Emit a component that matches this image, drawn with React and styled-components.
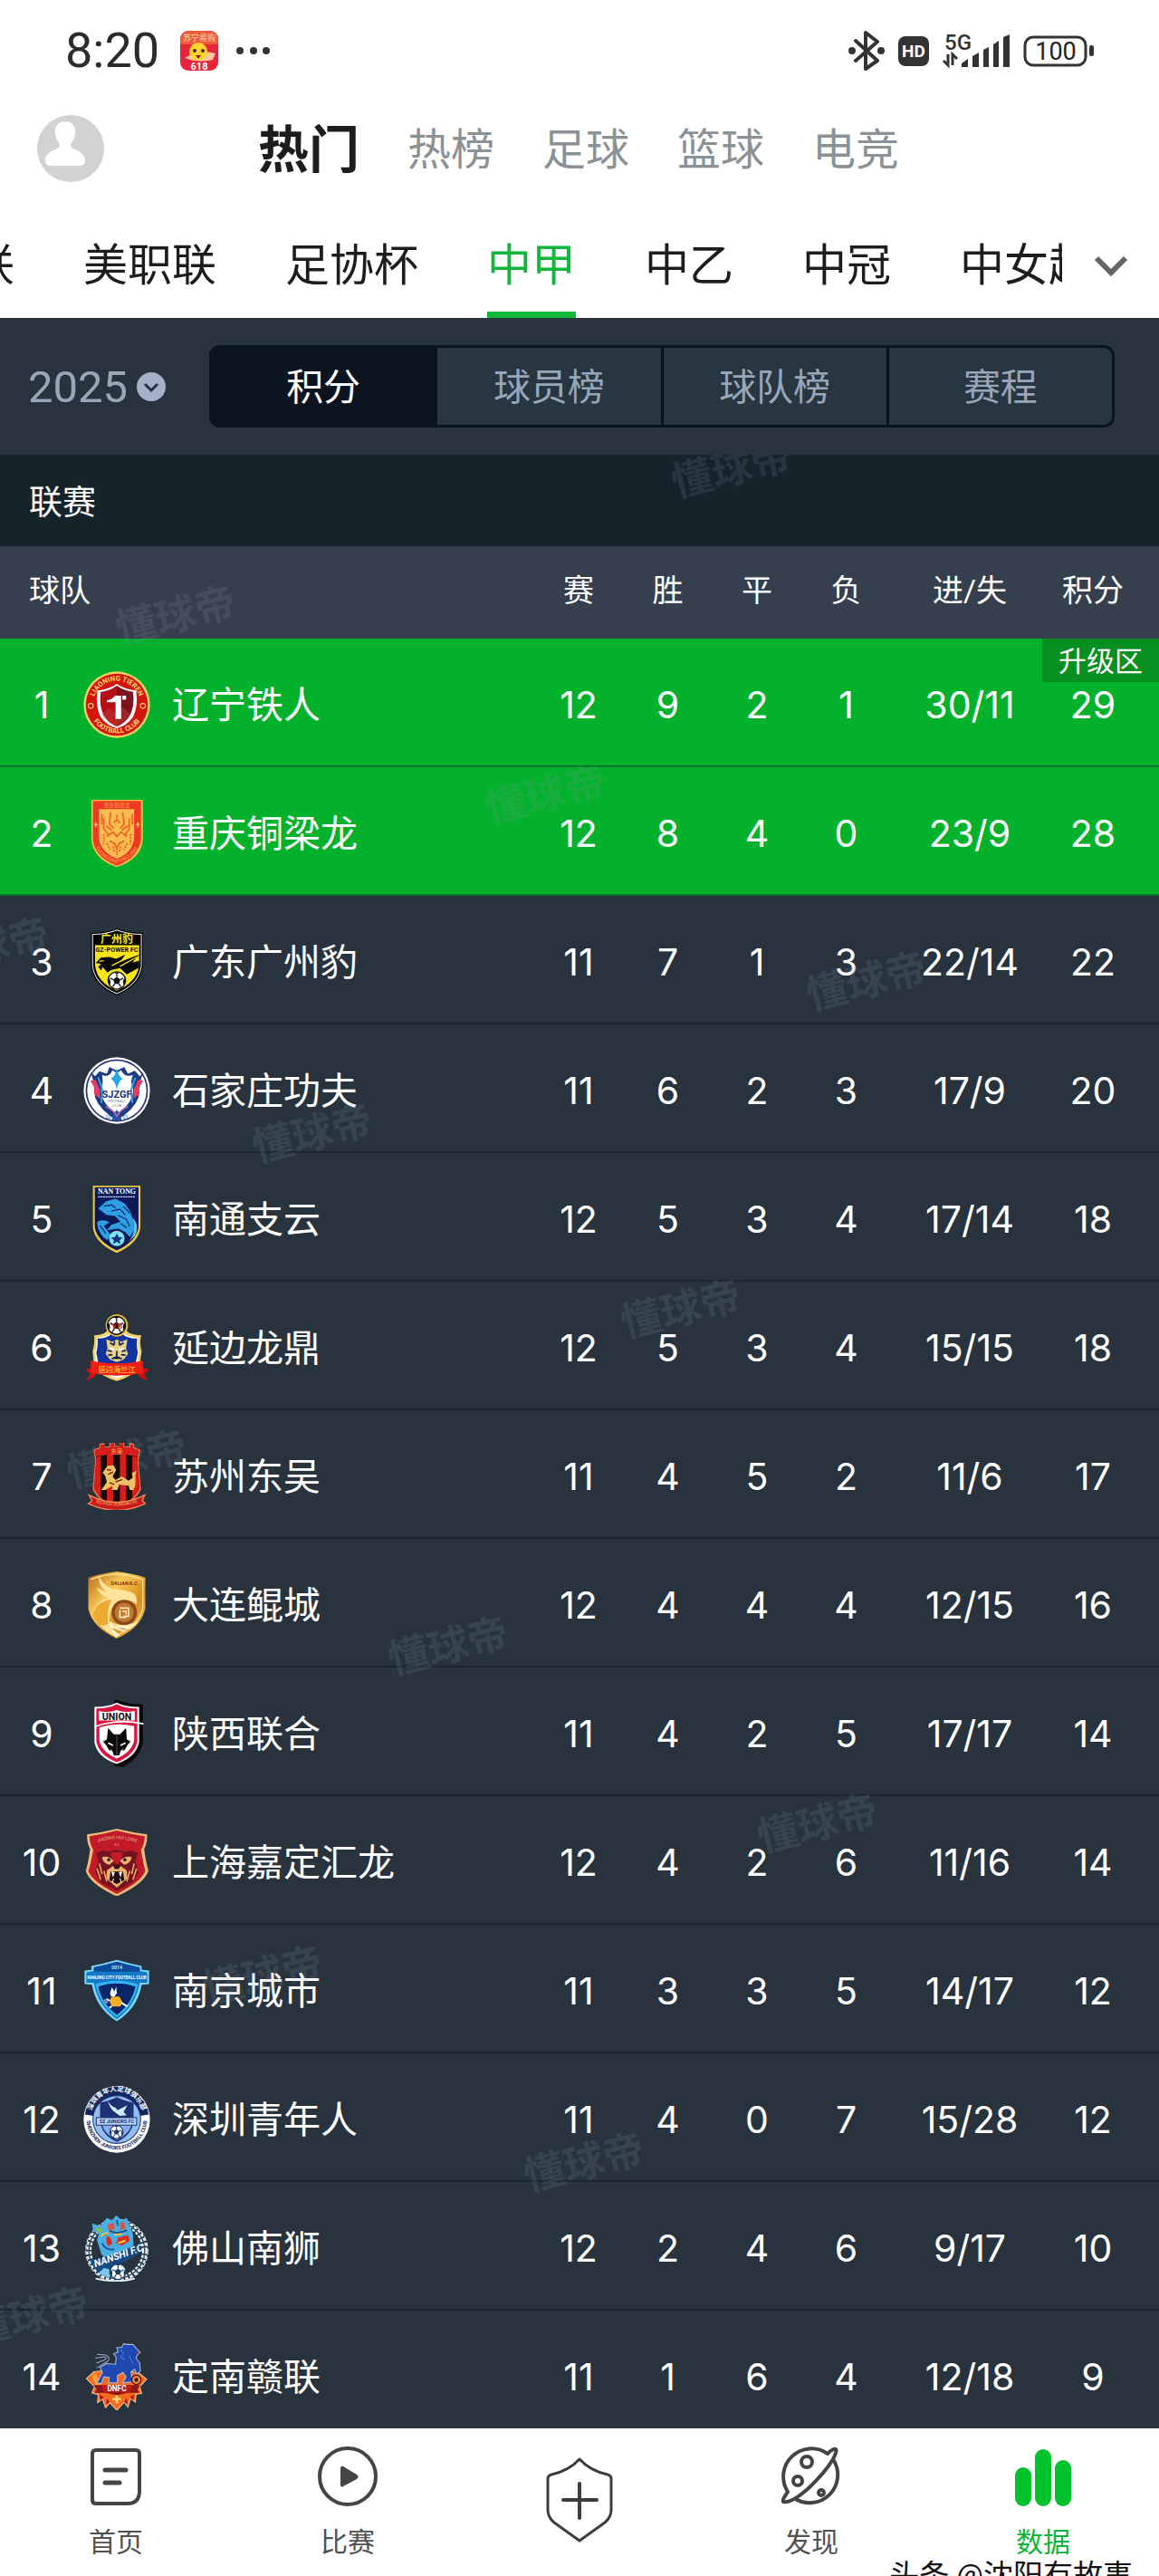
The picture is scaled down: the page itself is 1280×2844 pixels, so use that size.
import React from 'react'
import styled, { createGlobalStyle } from 'styled-components'

const teams = [
  { name: '辽宁铁人', played: 12, win: 9, draw: 2, loss: 1, goals: '30/11', points: 29, up: true, tag: '升级区' },
  { name: '重庆铜梁龙', played: 12, win: 8, draw: 4, loss: 0, goals: '23/9', points: 28, up: true },
  { name: '广东广州豹', played: 11, win: 7, draw: 1, loss: 3, goals: '22/14', points: 22 },
  { name: '石家庄功夫', played: 11, win: 6, draw: 2, loss: 3, goals: '17/9', points: 20 },
  { name: '南通支云', played: 12, win: 5, draw: 3, loss: 4, goals: '17/14', points: 18 },
  { name: '延边龙鼎', played: 12, win: 5, draw: 3, loss: 4, goals: '15/15', points: 18 },
  { name: '苏州东吴', played: 11, win: 4, draw: 5, loss: 2, goals: '11/6', points: 17 },
  { name: '大连鲲城', played: 12, win: 4, draw: 4, loss: 4, goals: '12/15', points: 16 },
  { name: '陕西联合', played: 11, win: 4, draw: 2, loss: 5, goals: '17/17', points: 14 },
  { name: '上海嘉定汇龙', played: 12, win: 4, draw: 2, loss: 6, goals: '11/16', points: 14 },
  { name: '南京城市', played: 11, win: 3, draw: 3, loss: 5, goals: '14/17', points: 12 },
  { name: '深圳青年人', played: 11, win: 4, draw: 0, loss: 7, goals: '15/28', points: 12 },
  { name: '佛山南狮', played: 12, win: 2, draw: 4, loss: 6, goals: '9/17', points: 10 },
  { name: '定南赣联', played: 11, win: 1, draw: 6, loss: 4, goals: '12/18', points: 9 },
]

const channels = ['热门', '热榜', '足球', '篮球', '电竞']
const leagues = ['联', '美职联', '足协杯', '中甲', '中乙', '中冠', '中女超']
const views = ['积分', '球员榜', '球队榜', '赛程']

// centre points inside the standings area
const marks = [
  [808, 16], [194, 178], [602, 376], [957, 582], [345, 750], [752, 944], [140, 1110],
  [495, 1316], [903, 1512], [290, 1680], [645, 1886], [-12, 544], [32, 2056],
]

const Ball = ({ x, y, r, ink = '#111' }) => (
  <g transform={`translate(${x} ${y}) scale(${r / 30})`}>
    <circle r="29" fill="#fff" stroke={ink} strokeWidth="4" />
    <path d="M0-12 12-3 7 11H-7L-12-3Z" fill={ink} />
    <path d="M0-12V-22M12-3 21-8M7 11 13 20M-7 11-13 20M-12-3-21-8" stroke={ink} strokeWidth="4" />
    <path d="M-9-27Q0-17 9-27ZM28-8Q18-6 22 14L28 8ZM-28-8Q-18-6-22 14L-28 8ZM20 21Q12 17 7 28ZM-20 21Q-12 17-7 28Z" fill={ink} />
  </g>
)

const badges = [
  <>
    <circle cx="108" cy="108" r="107" fill="#f6d162" />
    <circle cx="108" cy="108" r="100" fill="#d3140f" />
    <path d="M108 41Q131 58 170 62 178 112 160 148 140 176 108 184 76 176 56 148 38 112 46 62 85 58 108 41Z" fill="#fff" />
    <path d="M108 47Q131 64 160 67 166 112 150 142 134 168 108 178 82 168 66 142 50 112 56 67 85 64 108 47Z" fill="#b50f18" />
    <path d="M108 47Q131 64 160 67 166 112 150 142 134 168 108 178Z" fill="#7c1420" />
    <path d="M60 140 84 118 100 132 118 112 152 138 134 164 108 178 82 166Z" fill="#c33b35" opacity=".5" />
    <path d="M76 94Q94 92 102 79H122V154H104V100H76ZM126 79H138V92H126Z" fill="#fff" />
    <path id="ln1" d="M31 108A77 77 0 0 1 185 108" fill="none" />
    <path id="ln2" d="M16 108A92 92 0 0 0 200 108" fill="none" />
    <g fill="#f7d36b" fontSize="23" fontWeight="700" textAnchor="middle">
      <text><textPath href="#ln1" startOffset="50%">LIAONING TIEREN</textPath></text>
      <text><textPath href="#ln2" startOffset="50%">FOOTBALL CLUB</textPath></text>
    </g>
    <circle cx="24" cy="112" r="8" fill="none" stroke="#f7d36b" strokeWidth="3" />
    <circle cx="192" cy="112" r="8" fill="none" stroke="#f7d36b" strokeWidth="3" />
  </>,
  <>
    <path d="M29 0H187Q192 0 192 6V124Q190 190 108 217 28 190 26 124V6Q26 0 29 0Z" fill="#f9bd45" />
    <path d="M31 4H186V124Q182 184 108 212 34 184 31 124Z" fill="#ef3924" />
    <path d="M50 30H164V122Q160 170 108 190 54 168 50 122Z" fill="#fbbd50" />
    <text x="108" y="24" fontSize="17" textAnchor="middle" fill="#f9a13e">重庆铜梁龙</text>
    <g fill="none" stroke="#ee6324" strokeWidth="5">
      <path d="M66 60V94L84 116M148 60V94L132 116M88 40 84 78 98 92M126 40 132 78 118 92M98 74 108 64 118 74M108 48V60M76 118 96 104 108 118 122 104 142 118M84 132 102 142 108 158 114 142 132 132" />
      <path d="M66 110V144M152 110V144M76 140 86 162M142 140 130 162M96 150 100 170M120 150 116 170M108 164V178" strokeDasharray="7 3" />
      <path d="M60 46V80M158 46V80M74 84 92 98M144 84 124 98" />
    </g>
    <path id="cq" d="M34 132Q42 184 108 205 174 184 182 132" fill="none" />
    <text fontSize="15" fill="#fbb94e" textAnchor="middle"><textPath href="#cq" startOffset="50%">CHONGQING TONGLIANG</textPath></text>
    <path d="M34 80H46M40 72V88M170 80H182M176 72V88" stroke="#fbd06a" strokeWidth="4" />
  </>,
  <>
    <path d="M108 0Q140 14 192 14V122Q184 186 108 216 32 186 25 122V14Q78 14 108 0Z" fill="#050505" />
    <path d="M108 5Q142 19 187 19V122Q178 182 108 210 38 182 30 122V19Q76 19 108 5Z" fill="none" stroke="#eee" strokeWidth="3" />
    <path d="M38 54H180V120Q172 174 108 201 44 174 38 120Z" fill="#f7e51a" />
    <text x="108" y="47" fontSize="35" fontWeight="700" textAnchor="middle" fill="#f7e51a">广州豹</text>
    <text x="108" y="76" fontSize="21" fontWeight="700" textAnchor="middle" fill="#111">GZ-POWER FC</text>
    <path d="M40 112 56 94 84 92 106 98 136 84 118 108 180 85 158 110 180 104V126L140 148 118 128 90 134 78 142 62 124 58 136 48 124 58 114Z" fill="#080808" />
    <path d="M52 106 66 104M92 120 146 92M118 122 174 92" stroke="#f7e51a" strokeWidth="4" />
    <Ball x={108} y={168} r={29} />
  </>,
  <>
    <circle cx="108" cy="108" r="107" fill="#fff" />
    <circle cx="108" cy="108" r="98" fill="none" stroke="#27347b" strokeWidth="5" />
    <path d="M24 48 38 62 52 46 76 54 84 32 108 44 132 32 144 54 166 44 182 62 194 48 184 76 178 130Q164 170 108 204 52 170 38 130L32 76Z" fill="#1d3b83" />
    <path d="M60 58Q84 68 94 42L108 52 122 42Q134 68 160 58 150 80 160 100 166 144 108 184 52 144 58 100 66 80 60 58Z" fill="#fff" />
    <path d="M108 34Q112 62 127 70 112 78 108 106 104 78 89 70 104 62 108 34Z" fill="#25a6df" />
    <path d="M22 76 40 74 54 106V134L34 118 36 98Z" fill="#e43c68" />
    <path d="M194 76 176 74 162 106V134L182 118 180 98Z" fill="#e43c68" />
    <path d="M48 66 62 106 58 148M168 66 154 106 158 148" fill="none" stroke="#3aa0dc" strokeWidth="6" />
    <text x="108" y="130" fontSize="32" fontWeight="700" textAnchor="middle" fill="#21356f">SJZGF</text>
    <text x="108" y="146" fontSize="12" textAnchor="middle" fill="#777">FOOTBALL</text>
    <text x="108" y="161" fontSize="12" textAnchor="middle" fill="#777">CLUB</text>
    <path d="M92 204 98 182 108 170 118 182 124 204Z" fill="#2c55a1" />
    <path d="M72 160Q96 170 108 190 120 170 144 160" fill="none" stroke="#b46aa8" strokeWidth="5" />
    <text x="80" y="199" fontSize="16" textAnchor="middle" fill="#4258a0">20</text>
    <text x="136" y="199" fontSize="16" textAnchor="middle" fill="#4258a0">01</text>
  </>,
  <>
    <path d="M31 0H184V134Q180 184 108 217 36 184 31 134Z" fill="#f0c948" />
    <path d="M37 5H178V134Q172 178 108 209 44 178 37 134Z" fill="#0b1a57" />
    <text x="108" y="27" fontSize="23" fontWeight="700" textAnchor="middle" fill="#fff" fontFamily="Liberation Serif">NAN TONG</text>
    <path d="M48 36H168" stroke="#cfe6ff" strokeWidth="4" strokeDasharray="6 2" />
    <path d="M48 74 74 50 104 42 134 58 150 82 162 114 164 144 150 166 136 150 112 138 76 144 90 126 120 116 102 98 74 94 62 84Z" fill="#2f9fe4" />
    <path d="M44 118Q60 106 84 118L66 130 88 158 78 176Q48 158 44 118Z" fill="#2f9fe4" />
    <path d="M66 66 92 62 104 72M90 82 118 76 136 94M112 96 138 108 150 132M120 122 140 136M54 128 72 154M150 88 128 66" fill="none" stroke="#10317c" strokeWidth="4" />
    <path d="M140 186Q176 150 158 104 182 124 168 160Z" fill="#63bdf0" />
    <circle cx="108" cy="170" r="25" fill="#7fe2f5" />
    <path d="M108 154 114 166 127 168 117 176 120 188 108 181 96 188 99 176 89 168 102 166Z" fill="#15347a" />
  </>,
  <>
    <path d="M35 68Q70 66 78 50H138Q146 66 187 68 180 90 188 120L180 176Q150 204 108 215 66 204 36 176L30 120Q38 90 35 68Z" fill="#f2d16b" />
    <path d="M43 76Q78 72 86 58H130Q138 72 179 76 174 96 180 122L172 172Q146 196 108 207 70 196 44 172L38 122Q44 96 43 76Z" fill="#fff" />
    <path d="M46 78Q80 78 90 62H126Q136 78 174 78 170 98 176 124L166 168H50L42 124Q48 98 46 78Z" fill="#12349c" />
    <circle cx="108" cy="36" r="36" fill="#e9bd3c" />
    <Ball x={107} y={36} r={30} />
    <text x="108" y="46" fontSize="27" fontWeight="700" textAnchor="middle" fill="#e02a18" fontFamily="Liberation Serif">YB</text>
    <path d="M74 80 92 88 108 82 124 88 142 80 138 110 144 128 130 146 108 154 86 146 72 128 78 110Z" fill="#e9cf8c" />
    <path d="M86 92 100 100M130 92 116 100M78 116 92 120M138 116 124 120M80 132 94 130M136 132 122 130M100 86V98M116 86V98M92 144 108 136 124 144M108 118V136" stroke="#14244f" strokeWidth="5" />
    <path d="M86 110 100 114M130 110 116 114" stroke="#fff" strokeWidth="6" />
    <path d="M8 176 38 174V200L10 214 22 194ZM214 176 178 174V200L208 214 196 194Z" fill="#d01012" />
    <path d="M24 150Q108 166 192 150V190Q108 206 24 190Z" fill="#f01e16" />
    <text x="108" y="188" fontSize="24" fontWeight="700" textAnchor="middle" fill="#ffae2f">延边海兰江</text>
  </>,
  <>
    <path d="M33 22 52 14V2L68 0V12H84V-2H102V10H116V-2H132V12H148V0L164 2V14L184 22 178 56 186 150Q160 198 108 212 56 198 30 150L38 56Z" fill="#ec6a45" />
    <path d="M38 24 56 18V6H66V16H88V2H98V14H118V2H128V16H152V6H160V18L178 24 174 54 181 148Q156 192 108 206 60 192 35 148L42 54Z" fill="#140b0b" />
    <path d="M38 24 56 18V6H66V16H88V2H98V14H118V2H128V16H152V6H160V18L178 24 174 44Q108 30 42 44Z" fill="#d81e1c" />
    <path d="M42 46 56 42V180L35 148ZM76 38H96V200L76 194ZM118 38H138V196L118 202ZM158 42 174 46 181 148 158 180Z" fill="#d81e1c" />
    <text x="108" y="34" fontSize="19" textAnchor="middle" fill="#f3b25e">东吴</text>
    <path d="M62 96 78 74 98 72 106 88 94 108 104 120 124 108 146 122 160 112 156 98 172 90 168 102 168 134 162 152H150L146 138 116 134 110 152H92L94 138 72 152H58L76 126 70 104Z" fill="#eec168" />
    <path d="M76 86 90 88M80 102 96 94M104 126 126 118M84 128 100 134" stroke="#6e2012" strokeWidth="4" />
    <path d="M18 168Q108 214 198 168L190 186 200 196Q108 238 16 196L28 186Z" fill="#c71c1b" stroke="#f08a55" strokeWidth="4" />
    <path id="sz" d="M34 190Q108 216 182 190" fill="none" />
    <text fontSize="14" fill="#ffc36c" textAnchor="middle"><textPath href="#sz" startOffset="50%">SUZHOU DONGWU FC</textPath></text>
  </>,
  <>
    <defs>
      <linearGradient id="dl" x1="0" y1="0" x2="1" y2="1">
        <stop offset="0" stopColor="#b56516" /><stop offset=".35" stopColor="#f9ca5a" /><stop offset=".65" stopColor="#d88b1e" /><stop offset="1" stopColor="#f6c65f" />
      </linearGradient>
    </defs>
    <path d="M108 0Q150 4 200 20V120Q186 182 108 216 30 182 16 120V20Q66 4 108 0Z" fill="url(#dl)" />
    <path d="M24 26Q62 10 108 8 150 10 192 26V118Q180 174 108 206" fill="none" stroke="#fbe092" strokeWidth="4" />
    <path d="M50 10Q58 42 94 56 136 58 162 70 176 82 172 106 152 88 120 96 86 110 84 148 82 178 96 208 58 184 30 142 40 92 80 86 54 78 42 50 62 64 74 64 48 48 50 10Z" fill="#ffe39b" />
    <path d="M30 142Q44 90 92 92 74 120 80 170Q60 180 46 166Z" fill="#edaa32" />
    <circle cx="132" cy="132" r="41" fill="#8e4517" />
    <circle cx="132" cy="132" r="31" fill="#be7930" />
    <path d="M118 118H146V144H130M118 124V148H138M126 128H138V138" fill="none" stroke="#fce3b1" strokeWidth="5" />
    <path d="M84 160Q126 186 178 160 160 186 128 194L90 182 118 204 104 214Q84 194 84 160Z" fill="#fff0bd" />
    <path d="M92 166Q116 190 146 188L112 180Z" fill="#833e13" />
    <text x="134" y="43" fontSize="16" fontWeight="700" textAnchor="middle" fill="#7b3713">DALIAN K.C.</text>
  </>,
  <>
    <path d="M108 0Q146 14 192 14V136Q184 186 128 215L100 212V0Z" fill="#070707" />
    <path d="M108 8Q134 22 180 22V136Q170 184 108 206 44 184 36 136V22Q82 22 108 8Z" fill="#fff" />
    <path d="M108 13Q134 27 174 27V134Q164 178 108 200 52 178 42 134V27Q82 27 108 13Z" fill="#d8153e" />
    <path d="M50 35Q80 42 108 32 136 42 166 35V66H50ZM52 88Q108 70 164 84V130Q156 168 108 188 60 168 52 130Z" fill="#fff" />
    <path d="M36 86Q108 60 194 76" fill="none" stroke="#fff" strokeWidth="5" />
    <text x="108" y="65" fontSize="31" fontWeight="700" textAnchor="middle" fill="#0a0a0a">UNION</text>
    <path d="M80 90 98 110H118L138 90 140 126 152 134 120 164 116 178H98L94 164 64 134 76 126Z" fill="#080808" />
    <path d="M64 128 82 160 90 164 84 146ZM152 128 134 160 126 164 132 146Z" fill="#080808" />
    <path d="M80 138 96 146M136 138 120 146" stroke="#fff" strokeWidth="5" />
    <path d="M108 112V176" stroke="#555" strokeWidth="3" />
  </>,
  <>
    <path d="M12 18Q60 12 108 0 156 12 206 18 206 48 196 66 202 110 210 136 196 178 108 218 20 178 8 136 16 110 22 66 12 48 12 18Z" fill="#edbd77" />
    <path d="M20 24Q62 18 108 6 154 18 198 24 198 48 186 68 194 116 200 136 186 172 108 210 30 172 16 136 24 116 32 68 20 48 20 24Z" fill="#c11a29" />
    <path id="jd" d="M40 46Q108 20 178 46" fill="none" />
    <text fontSize="15" fill="#f0b78a" textAnchor="middle"><textPath href="#jd" startOffset="50%">JIADING HUI LONG</textPath></text>
    <text x="108" y="56" fontSize="12" fill="#f0b78a" textAnchor="middle">F.C</text>
    <path d="M42 78 62 70 84 74 108 68 134 74 156 70 176 78 168 106 178 140 158 174 108 200 58 174 38 140 50 106Z" fill="#741420" />
    <path d="M88 76H128L122 102 108 116 94 102Z" fill="#c11a29" />
    <path d="M60 92Q80 84 98 104L84 116Q64 112 60 92ZM156 92Q136 84 118 104L132 116Q152 112 156 92ZM76 134 98 118H118L140 134 142 160 108 190 74 160Z" fill="#ecb16a" />
    <path d="M94 116H122L114 130H102Z" fill="#3a1012" />
    <path d="M88 138H128L132 166 108 178 84 166Z" fill="#210b10" />
    <path d="M92 138 96 152 100 140M124 138 120 152 116 140M94 172 98 160M122 172 118 160" fill="#fff" stroke="#fff" strokeWidth="3" />
    <circle cx="82" cy="100" r="5" fill="#22090d" /><circle cx="134" cy="100" r="5" fill="#22090d" />
    <path d="M52 112 60 146M164 112 156 146M44 128 56 164M172 128 160 164M66 136 76 170M150 136 140 170" stroke="#e9a25e" strokeWidth="5" />
  </>,
  <>
    <path d="M108 8Q150 20 188 28V40L212 42V86L188 88Q176 162 108 206 40 162 28 88L4 86V42L26 40V28Q66 20 108 8Z" fill="#7bd6fb" />
    <path d="M108 14Q148 26 182 32V44L206 48V82H182Q170 156 108 199 46 156 34 82H10V48L34 44V32Q68 26 108 14Z" fill="#1479c9" />
    <path d="M108 14Q148 26 182 32V46H34V32Q68 26 108 14Z" fill="#0b4b9b" />
    <path d="M40 86Q108 64 176 86 166 152 108 193 50 152 40 86Z" fill="#35b3f0" />
    <path d="M48 94Q108 74 168 94 156 150 108 185 60 150 48 94Z" fill="#0a2568" />
    <text x="108" y="39" fontSize="15" fontWeight="700" textAnchor="middle" fill="#cfefff">2014</text>
    <text x="108" y="69" fontSize="13" fontWeight="700" textAnchor="middle" fill="#fff">NANJING CITY FOOTBALL CLUB</text>
    <path d="M92 96 100 110 106 94 108 116 100 126H90L86 116Z" fill="#fff" />
    <path d="M92 126H116L126 144 120 158H92L84 140Z" fill="#f9ad22" />
    <path d="M84 140 74 134M122 146 142 158M92 158 84 162" stroke="#fff" strokeWidth="6" />
    <circle cx="72" cy="142" r="8" fill="#7186bf" />
  </>,
  <>
    <circle cx="108" cy="108" r="107" fill="#fff" />
    <path d="M5 92A104 104 0 0 1 211 92L182 96A75 75 0 0 0 34 96Z" fill="#132860" />
    <path id="szt" d="M25 100A83 83 0 0 1 191 100" fill="none" />
    <text fontSize="22" fontWeight="700" fill="#fff" textAnchor="middle"><textPath href="#szt" startOffset="50%">深圳青年人足球俱乐部</textPath></text>
    <path id="szb" d="M11 108A97 97 0 0 0 205 108" fill="none" />
    <text fontSize="17" fontWeight="700" fill="#1b2d62" textAnchor="middle"><textPath href="#szb" startOffset="50%">SHENZHEN JUNIORS FOOTBALL CLUB</textPath></text>
    <circle cx="108" cy="108" r="77" fill="#93bcf0" stroke="#1b3475" strokeWidth="3" />
    <path d="M108 36Q130 48 162 54V116Q154 160 108 180 62 160 54 116V54Q86 48 108 36Z" fill="#1c3272" />
    <path d="M60 124H156Q148 156 108 174 68 156 60 124Z" fill="#86aeea" />
    <path d="M78 46Q88 66 104 70L110 78 142 62 130 84 140 94 118 96 104 86Q86 76 78 46Z" fill="#d3e8ff" />
    <path d="M42 102H172V126H42Z" fill="#b9d5fa" stroke="#1c3272" strokeWidth="3" />
    <text x="108" y="120" fontSize="16" fontWeight="700" textAnchor="middle" fill="#1c3272">SZ JUNIORS FC</text>
    <Ball x={107} y={148} r={22} ink="#1c3272" />
  </>,
  <>
    <circle cx="108" cy="116" r="90" fill="none" stroke="#e8f4fa" strokeWidth="17" strokeDasharray="10 5" />
    <circle cx="108" cy="116" r="90" fill="none" stroke="#2a4b66" strokeWidth="4" />
    <circle cx="108" cy="116" r="100" fill="none" stroke="#e8f4fa" strokeWidth="3" strokeDasharray="14 6" />
    <path d="M28 28 54 38 76 10 92 20 106 2 124 18 140 10 150 38 160 62 162 98 150 132 132 152H84L58 128 44 82 50 62 32 54Z" fill="#4aaee5" />
    <path d="M40 46 56 40 60 56 46 58Z" fill="#7dc23f" />
    <path d="M78 32 98 26 102 46 82 52ZM120 24 134 26 136 44 118 50Z" fill="#e4523c" />
    <path d="M74 72Q86 64 94 92L84 102Q72 96 74 72ZM112 74 144 66 150 84 124 100 106 92Z" fill="#d8301c" />
    <path d="M100 66 124 62M58 70Q66 58 80 60M112 92 136 84" stroke="#f4c73a" strokeWidth="6" />
    <path d="M84 52Q110 66 140 50M60 92Q72 116 100 112M108 18 112 36" fill="none" stroke="#184f87" strokeWidth="5" />
    <path d="M24 146Q96 136 184 90V124Q116 162 50 190Z" fill="#164a82" />
    <g transform="rotate(-19 110 134)">
      <text x="114" y="144" fontSize="32" fontWeight="700" fontStyle="italic" textAnchor="middle" fill="#fff">NANSHI F.C</text>
    </g>
    <path d="M48 190 66 172 84 176 84 204Z" fill="#78c7ee" />
    <Ball x={112} y={184} r={26} ink="#173d5c" />
    <path d="M40 206Q108 222 166 206" fill="none" stroke="#e8f4fa" strokeWidth="5" />
  </>,
  <>
    <path d="M10 114 34 92 108 84 180 96 204 116 182 140 188 162 170 164 168 190 152 178 144 206 132 190 108 216 86 192 72 208 62 180 46 192 48 166 28 160 36 140Z" fill="#f36a20" stroke="#ffc59b" strokeWidth="3" />
    <path d="M28 104 40 96 62 142 46 156ZM188 106 172 100 150 142 172 152Z" fill="#fb9d3d" />
    <path d="M44 128 62 94 54 78 74 66 104 68 106 44 98 34 112 28 108 14 124 14 130 2 144 4 160 4 174 20 184 30 174 38 170 48 182 64 184 90 172 100 166 84 154 92 158 124 128 128 138 108 128 94 110 104V128H82L84 110 66 108 58 130Z" fill="#1f48b1" stroke="#aebdd9" strokeWidth="3" />
    <path d="M42 80 76 60Q92 48 72 38L44 36M42 64 68 54Q80 46 68 44L38 48" fill="none" stroke="#9bb0cf" strokeWidth="3" />
    <path d="M174 28 184 32 176 36Z" fill="#e5323b" />
    <path d="M120 20 130 34 120 44 134 54M148 40 160 66" fill="none" stroke="#4a77d6" strokeWidth="3" />
    <circle cx="171" cy="118" r="15" fill="#f5903d" stroke="#4a1510" strokeWidth="4" />
    <path d="M171 110 178 116 175 124H167L164 116Z" fill="#4a1510" />
    <path d="M32 136 56 134H160L184 136 174 148 180 160H142L108 168 74 160H36L44 148Z" fill="#8f1616" />
    <path d="M58 134H158L150 158H66Z" fill="#b81f18" />
    <text x="108" y="155" fontSize="24" fontWeight="700" textAnchor="middle" fill="#fff">DNFC</text>
    <path d="M108 168V194M94 180H122" stroke="#ffd36a" strokeWidth="8" />
    <path d="M52 166 66 174 56 184ZM164 166 150 174 160 184ZM76 176 84 190 74 198ZM140 176 132 190 142 198Z" fill="#a31717" />
  </>,
]

function StatusBar() {
  return (
    <Status>
      <Clock>8:20</Clock>
      <svg width="42" height="44" viewBox="0 0 42 44">
        <rect width="42" height="44" rx="9" fill="#e8243c" />
        <path d="M0 9A9 9 0 0 1 9 0H33A9 9 0 0 1 42 9V15H0Z" fill="#ef5a3c" />
        <text x="21" y="11" fontSize="9" textAnchor="middle" fill="#ffd9b0">苏宁易购</text>
        <path d="M5 30Q21 20 39 25L36 32Q20 36 5 30Z" fill="#ffc9a0" />
        <circle cx="20" cy="23" r="10" fill="#ffd52e" />
        <circle cx="16" cy="22" r="2" fill="#512708" /><circle cx="25" cy="22" r="2" fill="#512708" />
        <path d="M17 27H23L20 31Z" fill="#7a1a12" />
        <text x="21" y="43" fontSize="11" fontWeight="700" textAnchor="middle" fill="#fff">618</text>
      </svg>
      <svg width="38" height="10" viewBox="0 0 38 10" fill="#333">
        <circle cx="4" cy="5" r="4" /><circle cx="19" cy="5" r="4" /><circle cx="33" cy="5" r="4" />
      </svg>
      <StatusIcons>
        <svg width="40" height="44" viewBox="0 0 40 44">
          <path d="M8 11 32 33 19 42V2L32 12 8 33" fill="none" stroke="#333" strokeWidth="4" strokeLinejoin="round" strokeLinecap="round" />
          <circle cx="4" cy="22" r="4" fill="#333" /><circle cx="36" cy="22" r="4" fill="#333" />
        </svg>
        <svg width="34" height="33" viewBox="0 0 34 33">
          <rect width="34" height="33" rx="8" fill="#333" />
          <text x="17" y="23" fontSize="19" fontWeight="700" textAnchor="middle" fill="#fff">HD</text>
        </svg>
        <svg width="74" height="40" viewBox="0 0 74 40">
          <text x="2" y="19" fontSize="24" fontWeight="500" fill="#333">5G</text>
          <path d="M6 24V36L1 31M11 36V24L16 29" fill="none" stroke="#333" strokeWidth="3" />
          <g fill="#333">
            <path d="M21 34 28 29V38H21ZM33 26 40 22V38H33ZM45 19 51 16V38H45ZM56 13 62 9V38H56ZM67 5 74 2V38H67Z" />
          </g>
        </svg>
        <svg width="78" height="35" viewBox="0 0 78 35">
          <rect x="2" y="2" width="67" height="31" rx="9" fill="none" stroke="#333" strokeWidth="3" />
          <rect x="73" y="11" width="5" height="12" rx="2" fill="#333" />
          <text x="36" y="27" fontSize="27" textAnchor="middle" fill="#222">100</text>
        </svg>
      </StatusIcons>
    </Status>
  )
}

function Standings() {
  return (
    <Main>
      <League>联赛</League>
      <Table>
        <colgroup>
          <col width="92" />
          <col />
          <col width="98" />
          <col width="99" />
          <col width="98" />
          <col width="99" />
          <col width="174" />
          <col width="122" />
        </colgroup>
        <thead>
          <tr>
            <HeadCell colSpan="2" $left>球队</HeadCell>
            <HeadCell>赛</HeadCell>
            <HeadCell>胜</HeadCell>
            <HeadCell>平</HeadCell>
            <HeadCell>负</HeadCell>
            <HeadCell>进/失</HeadCell>
            <HeadCell $last>积分</HeadCell>
          </tr>
        </thead>
        <tbody>
          {teams.map((team, i) => (
            <Row key={team.name} $up={team.up}>
              <Cell>{i + 1}</Cell>
              <Cell>
                <Team>
                  <Badge viewBox="0 0 216 216">{badges[i]}</Badge>
                  {team.name}
                </Team>
              </Cell>
              <Cell>{team.played}</Cell>
              <Cell>{team.win}</Cell>
              <Cell>{team.draw}</Cell>
              <Cell>{team.loss}</Cell>
              <Cell>{team.goals}</Cell>
              <Cell $last>
                {team.tag && <Tag>{team.tag}</Tag>}
                {team.points}
              </Cell>
            </Row>
          ))}
        </tbody>
      </Table>
      {marks.map(([x, y]) => (
        <Watermark key={`${x}-${y}`} style={{ left: x, top: y }}>懂球帝</Watermark>
      ))}
    </Main>
  )
}

function BottomNav() {
  return (
    <Nav>
      <NavItem href="#home">
        <svg width="56" height="67" viewBox="0 0 56 67" fill="none" stroke="#444" strokeWidth="4">
          <path d="M6 4H50Q54 4 54 8V49Q54 63 41 63H6Q2 63 2 59V8Q2 4 6 4Z" />
          <path d="M16 26H39M16 40H32" strokeWidth="5" strokeLinecap="round" />
        </svg>
        首页
      </NavItem>
      <NavItem href="#match">
        <svg width="66" height="67" viewBox="0 0 66 67">
          <circle cx="33" cy="33" r="31" fill="none" stroke="#444" strokeWidth="4" />
          <path d="M25 24Q25 21 28 22L43 31Q46 33 43 36L28 44Q25 46 25 42Z" fill="#444" />
        </svg>
        比赛
      </NavItem>
      <NavItem href="#create" aria-label="发布" $solo>
        <svg width="74" height="94" viewBox="0 0 74 94" fill="none" stroke="#3c3c3c" strokeWidth="3" strokeLinejoin="round" strokeLinecap="round">
          <path d="M37 2Q49 15 68 19 72 20 72 24V58Q72 66 65 72L37 92 9 72Q2 66 2 58V24Q2 20 6 19 25 15 37 2Z" />
          <path d="M37 29V67M19 47H56" strokeWidth="4" />
        </svg>
      </NavItem>
      <NavItem href="#discover">
        <svg width="66" height="67" viewBox="0 0 66 67" fill="none" stroke="#444" strokeWidth="4" strokeLinejoin="round">
          <path d="M51 8A31 31 0 0 0 7 50Q0 60 2 61 11 63 30 46 48 29 57 14 62 4 60 3 57 2 51 8Z" />
          <path d="M57 14A31 31 0 0 1 14 57" />
          <circle cx="28" cy="17" r="6" /><circle cx="18" cy="38" r="5" /><circle cx="44" cy="51" r="3" />
        </svg>
        发现
      </NavItem>
      <NavItem href="#data" $active>
        <svg width="62" height="67" viewBox="0 0 62 67" fill="#00c22d">
          <rect y="23" width="18" height="43" rx="9" /><rect x="22" y="3" width="18" height="63" rx="9" /><rect x="44" y="15" width="18" height="51" rx="9" />
        </svg>
        数据
      </NavItem>
      <Credit>头条 @沈阳有故事</Credit>
    </Nav>
  )
}

function App() {
  return (
    <Page>
      <GlobalStyle />
      <StatusBar />
      <Channels>
        <Avatar aria-label="我的">
          <svg width="74" height="74" viewBox="0 0 74 74">
            <circle cx="37" cy="37" r="37" fill="#d2d2d2" />
            <path d="M31 7C39 7 43 13 42 20 42 27 37 30 37 34 37 38 53 39 53 50 53 55 50 56 45 56H17C12 56 9 55 9 50 9 39 25 38 25 34 25 30 20 27 20 20 19 13 23 7 31 7Z" fill="#fff" />
          </svg>
        </Avatar>
        {channels.map((name, i) => (
          <Channel key={name} href="#channel" $active={i === 0}>{name}</Channel>
        ))}
      </Channels>
      <LeagueBar>
        <LeagueStrip>
          {leagues.map((name) => (
            <LeagueTab key={name} $active={name === '中甲'}>{name}</LeagueTab>
          ))}
        </LeagueStrip>
        <More aria-label="更多">
          <svg width="38" height="24" viewBox="0 0 38 24">
            <path d="M3 3 19 19 35 3" fill="none" stroke="#666" strokeWidth="6" />
          </svg>
        </More>
      </LeagueBar>
      <Toolbar>
        <Season>
          <Year aria-label="赛季" defaultValue="2025">
            <option>2025</option>
            <option>2024</option>
          </Year>
          <svg width="32" height="32" viewBox="0 0 32 32">
            <circle cx="16" cy="16" r="16" fill="#a5b1c9" />
            <path d="M9 13 16 20 23 13" fill="none" stroke="#28333f" strokeWidth="3" />
          </svg>
        </Season>
        <Segments>
          {views.map((name, i) => (
            <Segment key={name} $active={i === 0}>{name}</Segment>
          ))}
        </Segments>
      </Toolbar>
      <Standings />
      <BottomNav />
    </Page>
  )
}

const GlobalStyle = createGlobalStyle`
  * {
    box-sizing: border-box;
  }
  body {
    margin: 0;
  }
  button, select {
    font: inherit;
    border: 0;
    padding: 0;
    background: none;
    color: inherit;
  }
  a {
    color: inherit;
    text-decoration: none;
  }
  svg {
    display: block;
    flex-shrink: 0;
  }
`

const Page = styled.div`
  display: flex;
  flex-direction: column;
  height: 100vh;
  background: #fff;
  color: #1c1d1f;
  font-family: Roboto, 'Noto Sans CJK SC', sans-serif;
  line-height: 1;
  overflow: hidden;
`

const Status = styled.header`
  display: flex;
  align-items: center;
  flex-shrink: 0;
  gap: 20px;
  height: 112px;
  padding: 0 72px;
`

const Clock = styled.span`
  width: 107px;
  font-size: 54px;
  color: #2b2b2b;
`

const StatusIcons = styled.div`
  display: flex;
  align-items: center;
  gap: 15px;
  margin-left: auto;
`

const Channels = styled.nav`
  display: flex;
  align-items: center;
  flex-shrink: 0;
  gap: 53px;
  height: 104px;
  padding: 0 41px;
`

const Avatar = styled.button`
  margin-right: 117px;
`

const Channel = styled.a`
  padding-top: 4px;
  font-size: ${(props) => (props.$active ? '56px' : '48px')};
  font-weight: ${(props) => (props.$active ? 700 : 400)};
  color: ${(props) => (props.$active ? '#1c1d1f' : '#8b9296')};
`

const LeagueBar = styled.div`
  display: flex;
  flex-shrink: 0;
  height: 135px;
`

const LeagueStrip = styled.div`
  display: flex;
  flex: 1;
  gap: 76px;
  padding-right: 20px;
  overflow: hidden;
`

const LeagueTab = styled.button`
  flex-shrink: 0;
  padding-top: 26px;
  font-size: 49px;
  color: ${(props) => (props.$active ? '#0fb83a' : 'inherit')};
  border-bottom: 7px solid ${(props) => (props.$active ? '#0fb83a' : 'transparent')};

  &:first-child {
    margin-left: -33px;
  }
`

const More = styled.button`
  display: flex;
  align-items: center;
  justify-content: center;
  width: 107px;
  padding-top: 20px;
`

const Toolbar = styled.div`
  display: flex;
  align-items: center;
  flex-shrink: 0;
  height: 151px;
  padding: 0 49px 0 31px;
  background: #28333e;
  color: #97a6b9;
`

const Season = styled.label`
  display: flex;
  align-items: center;
  gap: 8px;
  width: 200px;
`

const Year = styled.select`
  appearance: none;
  width: 112px;
  padding-top: 2px;
  font-size: 49px;
`

const Segments = styled.div`
  display: flex;
  flex: 1;
  height: 91px;
  border: 3px solid #071520;
  border-radius: 12px;
  background: #273640;
  overflow: hidden;
`

const Segment = styled.button`
  flex: 1;
  padding-top: 4px;
  font-size: 41px;
  color: ${(props) => (props.$active ? '#fff' : 'inherit')};
  background: ${(props) => (props.$active ? '#0c141f' : 'none')};

  & + & {
    border-left: 3px solid #071520;
  }
`

const Main = styled.main`
  position: relative;
  flex: 1;
  min-height: 0;
  overflow: auto;
  overflow-x: hidden;
  scrollbar-width: none;
  background: #28333e;
  color: #fff;
`

const League = styled.h2`
  display: flex;
  align-items: center;
  height: 101px;
  margin: 0;
  padding: 6px 32px 0;
  font-size: 37px;
  font-weight: 400;
  background: #15242b;
`

const Table = styled.table`
  width: 100%;
  table-layout: fixed;
  border-spacing: 0;
`

const HeadCell = styled.th`
  height: 102px;
  padding: 0 ${(props) => (props.$last ? '24px' : 0)} 4px ${(props) => (props.$left ? '32px' : 0)};
  font-size: 34px;
  font-weight: 400;
  text-align: ${(props) => (props.$left ? 'left' : 'center')};
  background: #363f4e;
`

const Row = styled.tr`
  background: ${(props) => (props.$up ? '#04b12c' : '#28333e')};
`

const Cell = styled.td`
  position: relative;
  height: 142px;
  padding: 6px ${(props) => (props.$last ? '24px' : 0)} 0 0;
  border-bottom: 2px solid rgba(10, 22, 32, 0.4);
  font-family: Inter, 'Noto Sans CJK SC', sans-serif;
  font-size: 41px;
  text-align: center;
`

const Team = styled.div`
  display: flex;
  align-items: center;
  gap: 24px;
`

const Badge = styled.svg`
  position: relative;
  z-index: 2;
  width: 74px;
  height: 74px;
  font-family: Roboto, 'Noto Sans CJK SC', sans-serif;
`

const Tag = styled.span`
  position: absolute;
  top: 0;
  right: 0;
  width: 129px;
  padding: 9px 0 8px;
  font-size: 31px;
  background: #078f22;
`

const Watermark = styled.span`
  position: absolute;
  font-size: 45px;
  font-weight: 700;
  color: rgba(140, 155, 170, 0.17);
  pointer-events: none;
  transform: translate(-50%, -50%) rotate(-14deg);
`

const Nav = styled.nav`
  position: relative;
  display: grid;
  grid-template-columns: repeat(5, 1fr);
  flex-shrink: 0;
  height: 163px;
  background: #fff;
  overflow: hidden;
`

const NavItem = styled.a`
  display: flex;
  flex-direction: column;
  align-items: center;
  gap: 24px;
  padding-top: ${(props) => (props.$solo ? '32px' : '20px')};
  font-size: 30px;
  color: ${(props) => (props.$active ? '#0db336' : '#505050')};
`

const Credit = styled.span`
  position: absolute;
  right: 29px;
  top: 146px;
  font-size: 33px;
  color: #111;
  white-space: nowrap;
`

export default App
